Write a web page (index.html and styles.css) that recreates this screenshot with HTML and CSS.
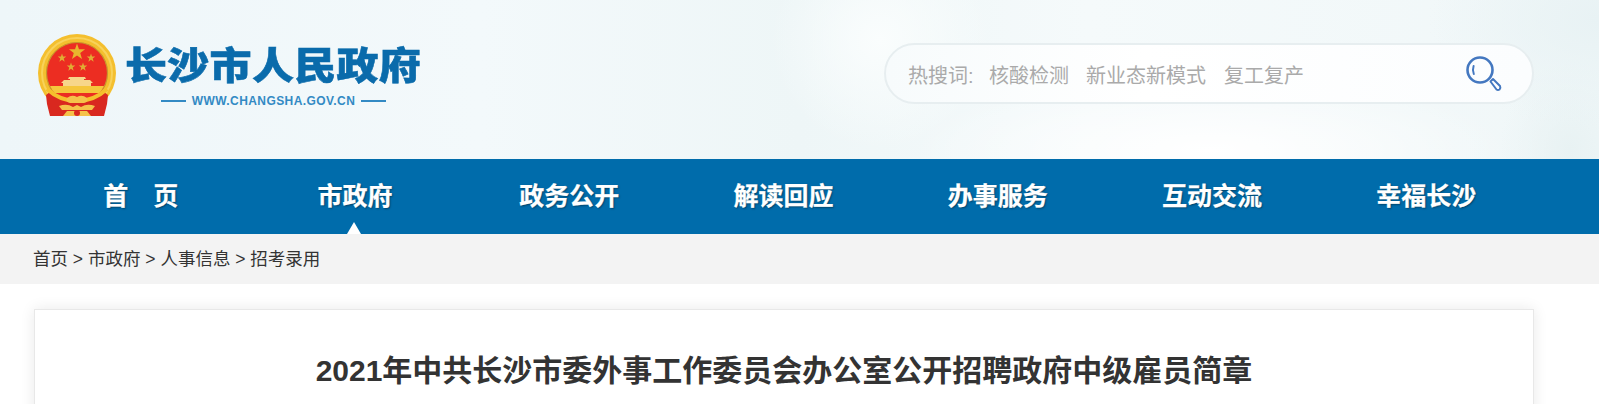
FILE: index.html
```html
<!DOCTYPE html>
<html lang="zh-CN">
<head>
<meta charset="utf-8">
<title>长沙市人民政府</title>
<link rel="stylesheet" href="styles.css">
</head>
<body>
<header class="top">
  <div class="logo">
    <svg class="emblem" width="80" height="84" viewBox="0 0 80 84" aria-hidden="true">
      <defs>
        <path id="star" d="M0 -10 L2.350 -3.240 L9.510 -3.090 L3.800 1.240 L5.880 8.090 L0 4 L-5.880 8.090 L-3.800 1.240 L-9.510 -3.090 L-2.350 -3.240 Z"/>
        <clipPath id="disc"><circle cx="40" cy="39" r="30"/></clipPath>
      </defs>
      <circle cx="40" cy="39" r="39" fill="#f4bf2e"/>
      <circle cx="40" cy="39" r="35" fill="none" stroke="#f8d25a" stroke-width="2"/>
      <circle cx="40" cy="39" r="30.500" fill="#ec2d22" stroke="#c8962c" stroke-width="1.200"/>
      <use href="#star" transform="translate(40 18) scale(.85)" fill="#e8b52e"/>
      <use href="#star" transform="translate(25 24) scale(.45)" fill="#e0ad34"/>
      <use href="#star" transform="translate(54 24) scale(.45)" fill="#e0ad34"/>
      <use href="#star" transform="translate(34 33) scale(.45)" fill="#e0ad34"/>
      <use href="#star" transform="translate(46 33) scale(.45)" fill="#e0ad34"/>
      <g clip-path="url(#disc)">
        <path d="M32 43 h16 l1 2 h-2 v1 h6 l3 3 h-2 v3 h-28 v-3 h-2 l3 -3 h6 v-1 h-2 Z" fill="#f7d68a"/>
        <rect x="8" y="52" width="64" height="7" fill="#f5c63c"/>
      </g>
      <path d="M13 58 L9 61 L10 70 L13 82 L67 82 L70 70 L71 61 L67 58 Q55 67 40 67 Q25 67 13 58 Z" fill="#d9281f"/>
      <path d="M10 55 Q23 67 40 67 Q57 67 70 55" fill="none" stroke="#f5c02c" stroke-width="4"/>
      <path d="M30 64 Q35 60 40 63 Q45 60 50 64 Q52 68 47 69 L33 69 Q28 68 30 64 Z" fill="#f5c24a"/>
      <path d="M22 72 Q30 69 36 73 L40 71 L44 73 Q50 69 58 72 L55 76 H25 Z" fill="#f5c24a"/>
      <path d="M26 82 L30 77 H50 L54 82 Z" fill="#f5c24a"/>
      <circle cx="40" cy="79" r="3" fill="#d9281f"/>
    </svg>
    <div class="brand">
      <div class="brand-name">长沙市人民政府</div>
      <div class="brand-url"><span class="dash"></span><span>WWW.CHANGSHA.GOV.CN</span><span class="dash"></span></div>
    </div>
  </div>
  <div class="search">
    <div class="hot">
      <span class="hot-label">热搜词:</span><span class="hot-item">核酸检测</span><span class="hot-item">新业态新模式</span><span class="hot-item hot-last">复工复产</span>
    </div>
    <svg class="glass" width="38" height="38" viewBox="0 0 38 38" aria-hidden="true">
      <circle cx="15" cy="15" r="12.500" fill="none" stroke="#4478c0" stroke-width="2.600"/>
      <path d="M8.600 11 Q7.200 15 8.800 19" fill="none" stroke="#4478c0" stroke-width="2" stroke-linecap="round"/>
      <path d="M25.500 26.500 L28 24 L35 31 Q36 33 34.500 34.500 Q33 35.500 31.500 34.500 Z" fill="#fff" stroke="#4478c0" stroke-width="2" stroke-linejoin="round"/>
    </svg>
  </div>
</header>
<nav class="nav">
  <ul class="nav-list">
    <li class="nav-item"><a class="nav-link">首&emsp;页</a></li>
    <li class="nav-item nav-current"><a class="nav-link">市政府</a></li>
    <li class="nav-item"><a class="nav-link">政务公开</a></li>
    <li class="nav-item"><a class="nav-link">解读回应</a></li>
    <li class="nav-item"><a class="nav-link">办事服务</a></li>
    <li class="nav-item"><a class="nav-link">互动交流</a></li>
    <li class="nav-item"><a class="nav-link">幸福长沙</a></li>
  </ul>
</nav>
<div class="crumbs">首页 &gt; 市政府 &gt; 人事信息 &gt; 招考录用</div>
<main class="panel">
  <h1 class="title">2021年中共长沙市委外事工作委员会办公室公开招聘政府中级雇员简章</h1>
</main>
</body>
</html>
```
FILE: styles.css
```css
* { box-sizing: border-box; }
html, body { margin: 0; padding: 0; }
body {
  height: 404px;
  overflow: hidden;
  background: #fff;
  color: #333;
  font-family: "Liberation Sans", "Noto Sans CJK SC", sans-serif;
}
.top {
  height: 159px;
  display: flex;
  justify-content: space-between;
  align-items: flex-start;
  padding: 34px 65px 0 37px;
  background:
    radial-gradient(ellipse 300px 75px at 1210px 150px, #ffffff 0%, rgba(255,255,255,0) 100%),
    radial-gradient(ellipse 110px 110px at 880px 40px, #fafdfd 0%, rgba(250,253,253,0) 100%),
    radial-gradient(ellipse 170px 110px at 1599px 20px, #e8f2f4 0%, rgba(232,242,244,0) 100%),
    radial-gradient(ellipse 70px 90px at 1570px 150px, #e8f2f3 0%, rgba(232,242,243,0) 100%),
    linear-gradient(90deg, #eef6f9 0%, #f3f9fb 30%, #eef6f7 50%, #f5fafb 68%, #f0f7f8 100%);
}
.logo { display: flex; align-items: flex-start; }
.emblem { display: block; flex: none; filter: blur(.35px); }
.brand { margin-left: 8px; padding-top: 9px; width: 297px; }
.brand-name {
  font-size: 42px;
  line-height: 46px;
  font-weight: 900;
  letter-spacing: .3px;
  color: #0a6bab;
  white-space: nowrap;
  -webkit-text-stroke: .6px #0a6bab;
  transform: scaleY(.9);
}
.brand-url {
  display: flex;
  align-items: center;
  justify-content: center;
  gap: 6px;
  margin-top: 5px;
  font-size: 12px;
  line-height: 14px;
  font-weight: 700;
  letter-spacing: .42px;
  color: #338ac4;
  white-space: nowrap;
}
.dash { width: 25px; height: 1.500px; background: #338ac4; }
.search {
  width: 650px;
  height: 61px;
  margin-top: 9px;
  border: 2px solid #e7eef0;
  border-radius: 31px;
  background: linear-gradient(90deg, #f7fbfc 0%, #fff 40%, #fbfdfe 100%);
  display: flex;
  align-items: center;
  justify-content: space-between;
  padding: 0 29px 0 22px;
}
.hot { font-size: 20px; line-height: 28px; color: #aaa; white-space: nowrap; display: flex; margin-top: 4px; }
.hot-label { width: 80px; }
.hot-item { margin-left: 1px; margin-right: 16px; }
.hot-last { margin-left: 2px; }
.glass { display: block; margin-top: 1px; }
.nav { height: 75px; background: #006cab; }
.nav-list {
  list-style: none;
  margin: 0;
  padding: 0;
  width: 1500px;
  margin-left: 34px;
  display: flex;
}
.nav-item {
  flex: 1 1 0;
  height: 75px;
  display: flex;
  align-items: center;
  justify-content: center;
  position: relative;
  padding-right: 1px;
}
.nav-link {
  font-size: 25px;
  line-height: 75px;
  font-weight: 700;
  color: #fff;
  -webkit-text-stroke: .25px #fff;
  text-shadow: 1px 1px 2px rgba(0,0,0,.4);
  white-space: nowrap;
}
.nav-current::after {
  content: "";
  position: absolute;
  left: 50%;
  bottom: 0;
  margin-left: -8px;
  border-left: 7px solid transparent;
  border-right: 7px solid transparent;
  border-bottom: 12px solid #fff;
}
.crumbs {
  height: 50px;
  padding-left: 33px;
  background: #f3f3f3;
  font-size: 17.500px;
  line-height: 50px;
  color: #333;
}
.panel {
  width: 1500px;
  height: 300px;
  margin: 25px 0 0 34px;
  background: #fff;
  border: 1px solid #e8e8e8;
  box-shadow: 0 0 14px rgba(0,0,0,.09);
  padding-top: 40px;
}
.title {
  margin: 0;
  font-size: 30px;
  line-height: 42px;
  font-weight: 700;
  color: #333;
  text-align: center;
}
```
